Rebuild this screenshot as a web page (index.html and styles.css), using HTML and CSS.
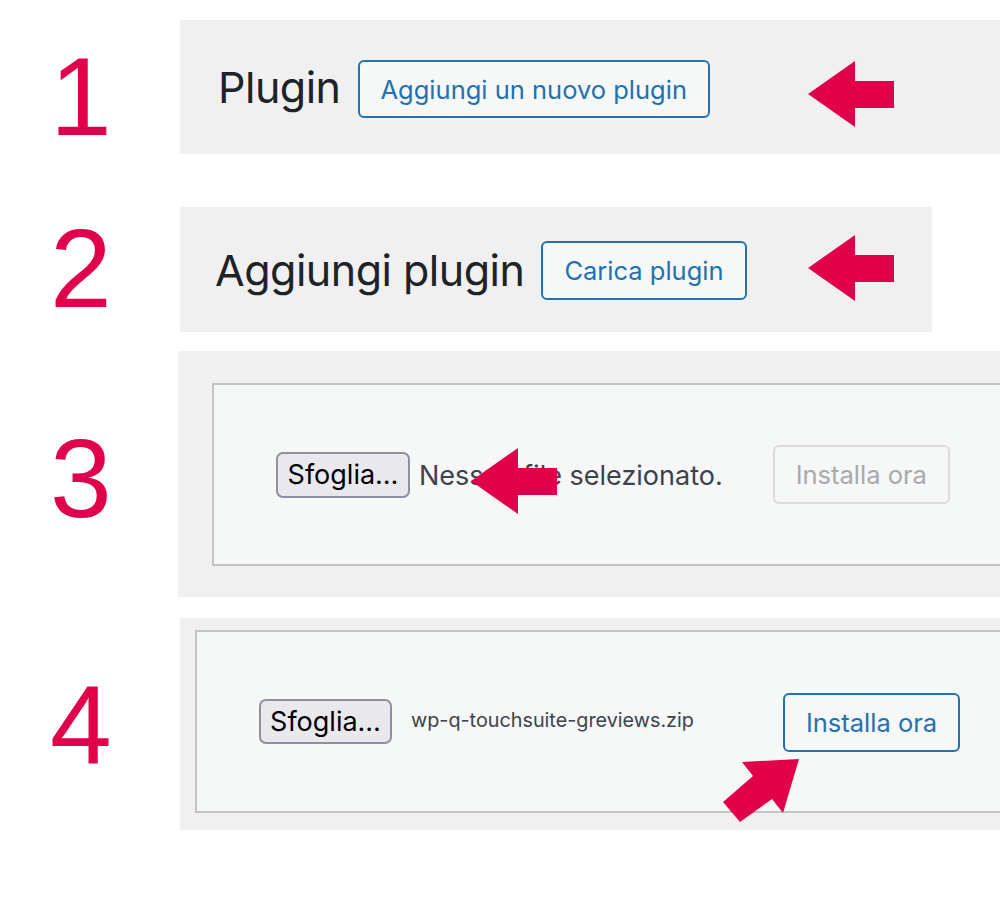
FILE: index.html
```html
<!DOCTYPE html>
<html lang="it">
<head>
<meta charset="utf-8">
<title>Installare un plugin</title>
<link rel="stylesheet" href="styles.css">
</head>
<body>
<main class="steps">

  <section class="step step-1">
    <div class="num">1</div>
    <div class="panel panel-head">
      <h1 class="title">Plugin</h1>
      <a class="btn btn-primary">Aggiungi un nuovo plugin</a>
    </div>
    <svg class="pointer pointer-left p1" viewBox="0 0 86 66" aria-hidden="true"><path d="M0 33 L47 0 L47 20 L86 20 L86 47 L47 47 L47 66 Z"/></svg>
  </section>

  <section class="step step-2">
    <div class="num">2</div>
    <div class="panel panel-head panel-narrow">
      <h1 class="title">Aggiungi plugin</h1>
      <a class="btn btn-primary">Carica plugin</a>
    </div>
    <svg class="pointer pointer-left p2" viewBox="0 0 86 66" aria-hidden="true"><path d="M0 33 L47 0 L47 20 L86 20 L86 47 L47 47 L47 66 Z"/></svg>
  </section>

  <section class="step step-3">
    <div class="num">3</div>
    <div class="panel panel-upload">
      <form class="upload-box">
        <span class="file-btn">Sfoglia…</span>
        <span class="file-name">Nessun file selezionato.</span>
        <span class="btn btn-disabled">Installa ora</span>
      </form>
    </div>
    <svg class="pointer pointer-left p3" viewBox="0 0 86 66" aria-hidden="true"><path d="M0 33 L47 0 L47 20 L86 20 L86 47 L47 47 L47 66 Z"/></svg>
  </section>

  <section class="step step-4">
    <div class="num">4</div>
    <div class="panel panel-upload">
      <form class="upload-box">
        <span class="file-btn">Sfoglia…</span>
        <span class="file-name small">wp-q-touchsuite-greviews.zip</span>
        <span class="btn btn-primary">Installa ora</span>
      </form>
    </div>
    <svg class="pointer p4" viewBox="0 0 82 70" aria-hidden="true"><path d="M79 4 L22 7 L33 21 L3 47 L20 67 L52 44 L63 58 Z"/></svg>
  </section>

</main>
</body>
</html>
```

FILE: styles.css
```css
* { box-sizing: border-box; }

html, body {
  margin: 0;
  background: #ffffff;
}

body {
  font-family: Inter, "Liberation Sans", sans-serif;
  color: #1d2327;
  overflow: hidden;
}

.steps {
  padding-top: 20px;
  width: 1000px;
}

.step {
  position: relative;
  display: flex;
  align-items: center;
}

.step-1 { height: 134px; margin-bottom: 53px; }
.step-2 { height: 125px; margin-bottom: 19px; }
.step-3 { height: 246px; margin-bottom: 21px; }
.step-4 { height: 212px; }

/* big step numbers */
.num {
  flex: 0 0 180px;
  padding-left: 50px;
  font-family: "Liberation Sans", Arial, sans-serif;
  font-size: 111px;
  line-height: 1;
  color: #e1004a;
}
.step-1 .num { padding-top: 20px; }
.step-3 .num { padding-top: 10px; }
.step-4 .num { padding-top: 2px; }

.panel {
  align-self: stretch;
  flex: 1 1 auto;
  background: #f0f0f1;
  overflow: hidden;
}

.panel-head {
  display: flex;
  align-items: center;
  gap: 17px;
}
.step-1 .panel-head { padding: 4px 0 0 38px; }
.step-2 .panel-head { padding: 2px 0 0 35px; }
.panel-narrow { flex: 0 0 752px; }

.title {
  margin: 0;
  font-size: 43px;
  font-weight: 400;
  letter-spacing: -0.5px;
  line-height: 1.2;
  color: #1d2327;
}
.step-1 .title { padding-bottom: 2px; }

.btn {
  display: inline-flex;
  align-items: center;
  height: 58px;
  padding: 0 21px;
  border: 2px solid #2271b1;
  border-radius: 6px;
  background: #f6f7f7;
  font-size: 25.5px;
  color: #2271b1;
  white-space: nowrap;
}
.step-2 .btn { height: 59px; }

.btn-disabled {
  height: 59px;
  border-color: #dcdcde;
  color: #a7aaad;
}

/* upload form */
.step-3 .panel-upload {
  margin-left: -2px;
  padding: 32px 0 31px 34px;
}
.step-4 .panel-upload {
  padding: 12px 0 17px 15px;
}

.upload-box {
  display: flex;
  align-items: center;
  height: 183px;
  margin: 0 -20px 0 0;
  padding-left: 62px;
  background: #f6f7f7;
  border: 2px solid #c3c4c7;
}

.file-btn {
  display: inline-flex;
  align-items: center;
  justify-content: center;
  width: 134px;
  height: 46px;
  border: 2px solid #8f8f9d;
  border-radius: 7px;
  background: #e9e9ed;
  font-size: 27px;
  color: #000000;
}
.step-4 .file-btn { width: 133px; height: 45px; }

.file-name {
  margin-left: 9px;
  font-size: 27px;
  color: #3c434a;
  white-space: nowrap;
}
.step-3 .file-name { margin-right: 50px; padding-top: 2px; }

.file-name.small {
  margin-left: 19px;
  margin-right: 89px;
  font-size: 19.8px;
  padding-bottom: 4px;
}
.step-4 .btn { height: 59px; margin-top: 2px; }

/* red pointers drawn over the panels */
.pointer {
  position: absolute;
  fill: #e1004a;
}
.pointer-left { width: 86px; height: 66px; }
.p1 { left: 808px; top: 41px; }
.p2 { left: 808px; top: 28px; }
.p3 { left: 471px; top: 97px; }
.p4 { left: 720px; top: 137px; width: 82px; height: 70px; }
```
